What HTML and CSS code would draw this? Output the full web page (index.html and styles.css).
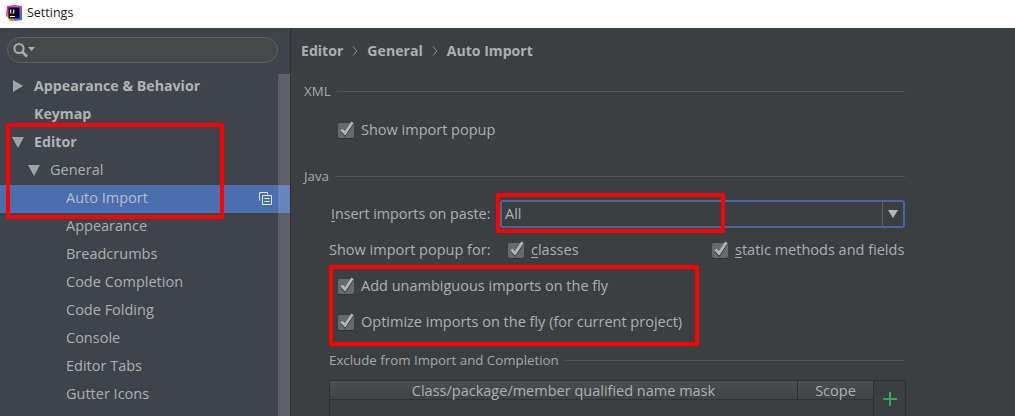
FILE: index.html
```html
<!DOCTYPE html>
<html lang="en">
<head>
<meta charset="utf-8">
<title>Settings</title>
<link rel="stylesheet" href="styles.css">
</head>
<body>
<svg class="defs" width="0" height="0" aria-hidden="true">
  <symbol id="check" viewBox="0 0 18 18">
    <rect x="1" y="2.500" width="16" height="15.500" rx="2" fill="#2f3133"/>
    <rect x="1" y="2" width="16" height="15" rx="2" fill="#67696b"/>
    <path d="M4.500 8.500 L8 12.800 L15.500 1.500" fill="none" stroke="#2b2d2e" stroke-width="2.200" transform="translate(0 1.400)"/>
    <path d="M4.500 8.500 L8 12.600 L15.500 1.200" fill="none" stroke="#b4b6b7" stroke-width="2.700"/>
  </symbol>
  <linearGradient id="logo-a" x1="0" y1="0" x2="1" y2="1">
    <stop offset="0" stop-color="#f0386b"/>
    <stop offset=".5" stop-color="#b74af7"/>
    <stop offset="1" stop-color="#087cfa"/>
  </linearGradient>
</svg>

<header class="titlebar">
  <svg class="logo" viewBox="0 0 16 16" aria-hidden="true">
    <path d="M1 1 9 0 16 1 16 15 8 16 0 11z" fill="url(#logo-a)"/>
    <path d="M0 9 4 16 9 16 5 9z" fill="#fc801d"/>
    <rect x="2.500" y="2.500" width="11" height="11" fill="#0b0b0f"/>
    <rect x="4" y="11" width="5" height="1" fill="#fff"/>
    <path d="M4.200 4.500h1v4h-1zM7.200 4.500h1.100v3.200q0 .9-1 .9h-.9v-.9h.8z" fill="#fff"/>
  </svg>
  <span class="title-text">Settings</span>
</header>

<div class="window">
  <aside class="sidebar">
    <div class="search">
      <svg class="search-icon" viewBox="0 0 24 16" aria-hidden="true">
        <circle cx="7" cy="6.500" r="4.600" fill="none" stroke="#a9acae" stroke-width="2"/>
        <path d="M10.500 10 L15 14.500" stroke="#a9acae" stroke-width="2.600"/>
        <path d="M16 5h7l-3.500 4z" fill="#a9acae"/>
      </svg>
    </div>
    <div class="tree-wrap">
      <ul class="tree">
        <li class="row bold"><i class="arrow right"></i>Appearance &amp; Behavior</li>
        <li class="row bold">Keymap</li>
        <li class="row bold"><i class="arrow down"></i>Editor</li>
        <li class="row level1"><i class="arrow down"></i>General</li>
        <li class="row level2 selected">Auto Import
          <svg class="copy" viewBox="0 0 13 13" aria-hidden="true">
            <path d="M.5 8.500V.5h8v2" fill="none" stroke="#e4e8f0"/>
            <path d="M3.500 3.500h9v9h-9z" fill="none" stroke="#e4e8f0"/>
            <path d="M5.500 6.500h5M5.500 9.500h5" stroke="#e4e8f0"/>
          </svg>
        </li>
        <li class="row level2">Appearance</li>
        <li class="row level2">Breadcrumbs</li>
        <li class="row level2">Code Completion</li>
        <li class="row level2">Code Folding</li>
        <li class="row level2">Console</li>
        <li class="row level2">Editor Tabs</li>
        <li class="row level2">Gutter Icons</li>
      </ul>
      <div class="scrollbar"></div>
    </div>
  </aside>

  <main class="main">
    <nav class="crumbs">
      <span>Editor</span>
      <svg class="sep" viewBox="0 0 24 12" aria-hidden="true"><path d="M10 1.500 14 6 10 10.500" fill="none" stroke="#8f9294"/></svg>
      <span>General</span>
      <svg class="sep" viewBox="0 0 24 12" aria-hidden="true"><path d="M10 1.500 14 6 10 10.500" fill="none" stroke="#8f9294"/></svg>
      <span>Auto Import</span>
    </nav>

    <section class="group xml">
      <div class="group-title"><span>XML</span></div>
      <label class="check-row"><svg class="cb"><use href="#check"/></svg>Show import popup</label>
    </section>

    <section class="group java">
      <div class="group-title"><span>Java</span></div>
      <div class="paste-row">
        <span class="paste-label"><u>I</u>nsert imports on paste:</span>
        <div class="combo"><span class="combo-value">All</span><span class="combo-btn"><i class="combo-arrow"></i></span></div>
      </div>
      <div class="for-row">
        <span class="for-label">Show import popup for:</span>
        <label class="inline"><svg class="cb"><use href="#check"/></svg><span><u>c</u>lasses</span></label>
        <label class="inline"><svg class="cb"><use href="#check"/></svg><span><u>s</u>tatic methods and fields</span></label>
      </div>
      <label class="check-row fly"><svg class="cb"><use href="#check"/></svg>Add unambiguous imports on the fly</label>
      <label class="check-row fly"><svg class="cb"><use href="#check"/></svg>Optimize imports on the fly (for current project)</label>
    </section>

    <section class="exclude">
      <div class="group-title"><span>Exclude from Import and Completion</span></div>
      <div class="table-wrap">
        <div class="table">
          <div class="th th-name">Class/package/member qualified name mask</div>
          <div class="th th-scope">Scope</div>
        </div>
        <div class="toolbar">
          <svg class="plus" viewBox="0 0 16 16" aria-hidden="true"><path d="M8 1v14M1 8h14" stroke="#2fa84f" stroke-width="2"/></svg>
        </div>
      </div>
    </section>
  </main>
</div>

<div class="mark mark-tree"></div>
<div class="mark mark-combo"></div>
<div class="mark mark-fly"></div>
</body>
</html>
```

FILE: styles.css
```css
* { box-sizing: border-box; }
html, body { margin: 0; height: 416px; overflow: hidden; }
body {
  position: relative;
  background: #3c3f41;
  color: #adb0b2;
  font: 14.5px/20px "Open Sans", "Noto Sans", sans-serif;
}
.defs { position: absolute; }
u { text-underline-offset: 2px; }

.titlebar {
  height: 28px;
  background: #fff;
  display: flex;
  align-items: center;
  padding-left: 6px;
  color: #1a1a1a;
  font-size: 12.5px;
}
.logo { width: 16px; height: 16px; margin-right: 5px; margin-top: -3px; }
.title-text { margin-top: -3px; }

.window { display: flex; height: 388px; }

.sidebar {
  width: 291px;
  flex: none;
  background: #3f434b;
  border-right: 1px solid #323232;
  display: flex;
  flex-direction: column;
}
.search {
  width: 271px;
  height: 26px;
  margin: 9px 0 10px 7px;
  border: 1px solid #5e6060;
  border-radius: 13px;
  background: #45494a;
  display: flex;
  align-items: center;
  padding-left: 4px;
}
.search-icon { width: 24px; height: 16px; }

.tree-wrap { flex: 1; display: flex; min-height: 0; position: relative; }
.tree { list-style: none; margin: 0; padding: 0; flex: 1; }
.row {
  height: 28px;
  display: flex;
  align-items: center;
  padding: 0 0 2px 34px;
  position: relative;
  white-space: nowrap;
}
.row.bold { font-size: 14.2px; font-weight: 700; color: #b0b3b5; }
.row.level1 { padding-left: 50px; }
.row.level2 { padding-left: 66px; }
.row.selected { background: #4b6eaf; color: #b6bdcb; }
.arrow { position: absolute; width: 0; height: 0; }
.arrow.right { left: 13px; border-style: solid; border-width: 6px 0 6px 10px; border-color: transparent transparent transparent #a0a3a5; }
.arrow.down { left: 12px; border-style: solid; border-width: 11px 6px 0; border-color: #a0a3a5 transparent transparent; }
.level1 .arrow.down { left: 28px; }
.copy { position: absolute; left: 259px; top: 7px; width: 13px; height: 13px; }
.scrollbar {
  position: absolute;
  right: 0;
  top: 1px;
  bottom: 0;
  width: 12px;
  background: rgba(255, 255, 255, .16);
}

.main { flex: 1; padding-left: 10px; min-width: 0; }
.crumbs {
  height: 20px;
  margin-top: 13px;
  font-size: 14.1px;
  font-weight: 700;
  color: #adb0b2;
  display: flex;
  align-items: center;
}
.sep { width: 24px; height: 12px; flex: none; }

.group-title {
  display: flex;
  align-items: center;
  gap: 6px;
  font-size: 13.300px;
  width: 601px;
}
.group-title::after { content: ""; flex: 1; height: 1px; background: #515456; }
.group-title span { color: #a5a8aa; }
.xml { margin-top: 20px; padding-left: 3px; }
.java { margin-top: 26px; padding-left: 3px; }

.check-row { display: flex; align-items: center; height: 20px; padding-left: 33px; }
.cb { width: 18px; height: 18px; flex: none; margin-right: 6px; }
.xml .check-row { margin-top: 19px; }

.paste-row { display: flex; align-items: center; margin-top: 14px; padding-left: 27px; }
.paste-label { width: 169px; flex: none; white-space: nowrap; font-size: 14.3px; }
.combo {
  width: 405px;
  height: 28px;
  border: 2px solid #46689a;
  border-radius: 3px;
  display: flex;
  align-items: center;
  justify-content: space-between;
  padding-left: 3px;
}
.combo-btn { width: 21px; height: 100%; border-left: 1px solid #5a5d5f; display: flex; align-items: center; justify-content: center; }
.combo-arrow { width: 0; height: 0; border-style: solid; border-width: 8px 5px 0; border-color: #b4b7b9 transparent transparent; }

.for-row { display: flex; align-items: center; margin-top: 12px; padding-left: 25px; height: 20px; white-space: nowrap; }
.for-label { width: 178px; flex: none; }
.inline { display: flex; align-items: center; }
.inline:nth-of-type(1) { width: 204px; flex: none; }
.fly { margin-top: 16px; }

.exclude { margin-top: 18px; padding-left: 28px; }
.exclude .group-title { width: 575px; }
.table-wrap { display: flex; margin-top: 10px; width: 577px; height: 40px; }
.table {
  width: 544px;
  height: 20px;
  display: flex;
  background: linear-gradient(#4b4e51, #404345);
  border-top: 1px solid #2f3133;
  border-bottom: 1px solid #2f3133;
  border-left: 1px solid #2f3133;
  position: relative;
  white-space: nowrap;
}
.table::after {
  content: "";
  position: absolute;
  left: -1px;
  top: 19px;
  height: 20px;
  border-left: 1px solid #2f3133;
}
.th { text-align: center; line-height: 20px; }
.th-name { width: 468px; border-right: 1px solid #2f3133; }
.th-scope { flex: 1; }
.toolbar {
  width: 33px;
  border: 1px solid #2f3133;
  border-bottom: 0;
  display: flex;
  justify-content: center;
  padding-top: 10px;
}
.plus { width: 16px; height: 16px; }

.mark { position: absolute; border: 4px solid #f00; border-radius: 2px; pointer-events: none; }
.mark-tree { left: 6px; top: 123px; width: 218px; height: 96px; }
.mark-combo { left: 496px; top: 193px; width: 229px; height: 40px; }
.mark-fly { left: 329px; top: 265px; width: 370px; height: 81px; }
```
